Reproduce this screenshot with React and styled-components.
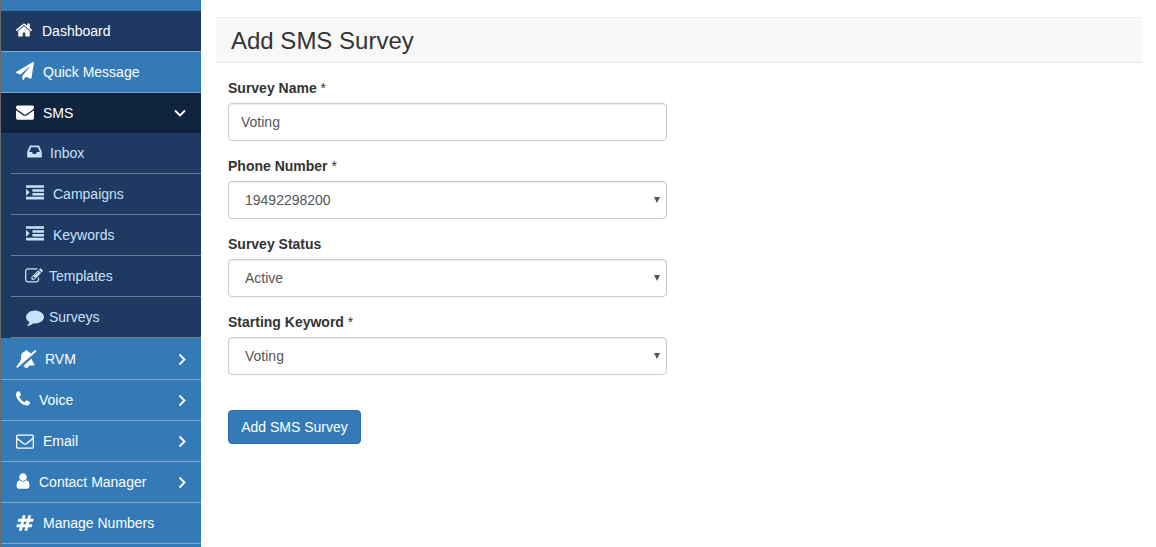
import React from "react";
import styled, { createGlobalStyle } from "styled-components";

const Global = createGlobalStyle`
  html, body { margin: 0; padding: 0; background: #fff; overflow: hidden; }
  body { font-family: "Liberation Sans", Arial, sans-serif; font-size: 14px; color: #333; }
  * { box-sizing: border-box; }
`;

const Page = styled.div`
  display: flex;
  height: 547px;
  width: 1156px;
  overflow: hidden;
`;
const Sidebar = styled.nav`
  width: 201px;
  flex: none;
  height: 547px;
  border-left: 1px solid #6b6b6b;
  background: #337ab7;
  padding-top: 11px;
  overflow: hidden;
`;
const MainRow = styled.a`
  display: flex;
  align-items: center;
  height: ${p => (p.$tone === "active" ? 40 : 41)}px;
  padding: 0 14px ${p => (p.$tone === "active" ? 0 : 1)}px 15px;
  color: #fff;
  font-size: 14px;
  border-bottom: ${p => (p.$tone === "active" ? "none" : "1px solid #7ea8d3")};
  background: ${p => (p.$tone === "active" ? "#10233f" : p.$tone === "dark" ? "#1e3a63" : "#337ab7")};
`;
const SubList = styled.div`
  background: #1e3a63;
  padding-left: 10px;
  margin-bottom: 1px;
`;
const SubRow = styled.a`
  display: flex;
  align-items: center;
  height: 41px;
  padding: 0 0 1px 15px;
  color: #c8e1f8;
  font-size: 14px;
  border-bottom: 1px solid #67799a;
  &:last-child { border-bottom-color: #7b7f86; }
`;
const IconSlot = styled.span`
  flex: none;
  width: ${p => p.$w}px;
  display: flex;
  align-items: center;
  transform: translate(${p => p.$dx || 0}px, ${p => p.$dy || 0}px);
  svg { display: block; fill: currentColor; }
`;
const Label = styled.span`
  flex: 1;
  white-space: nowrap;
`;
const Caret = styled.svg`
  flex: none;
  width: 12px;
  height: 12px;
  overflow: visible;
  fill: none;
  stroke: currentColor;
  stroke-width: 1.8;
`;

const Main = styled.main`
  flex: 1;
  padding: 17px 14px 0 15px;
`;
const TitleBar = styled.header`
  height: 46px;
  background: #f8f8f8;
  border-top: 1px solid #eee;
  border-bottom: 1px solid #e7e7e7;
  padding: 2px 0 0 15px;
  display: flex;
  align-items: center;
`;
const Title = styled.h1`
  margin: 0;
  font-size: 24px;
  font-weight: 400;
  color: #333;
`;
const Form = styled.form`
  width: 439px;
  margin: 15px 0 0 12px;
`;
const Field = styled.div`
  margin-bottom: 15px;
`;
const FieldLabel = styled.label`
  display: block;
  font-weight: 700;
  font-size: 14px;
  line-height: 20px;
  margin-bottom: 5px;
  color: #333;
  span { font-weight: 400; }
`;
const Input = styled.input`
  display: block;
  width: 100%;
  height: 38px;
  padding: 6px 12px;
  font: 14px "Liberation Sans", Arial, sans-serif;
  color: #555;
  background: #fff;
  border: 1px solid #ccc;
  border-radius: 4px;
  box-shadow: inset 0 1px 1px rgba(0, 0, 0, 0.075);
`;
const SelectWrap = styled.div`
  position: relative;
  &::after {
    content: "";
    position: absolute;
    right: 7px;
    top: 16px;
    border-left: 3.5px solid transparent;
    border-right: 3.5px solid transparent;
    border-top: 6px solid #555;
    pointer-events: none;
  }
`;
const Select = styled.select`
  display: block;
  width: 100%;
  height: 38px;
  padding: 6px 12px 6px 16px;
  appearance: none;
  font: 14px "Liberation Sans", Arial, sans-serif;
  color: #555;
  background: #fff;
  border: 1px solid #ccc;
  border-radius: 4px;
  box-shadow: inset 0 1px 1px rgba(0, 0, 0, 0.075);
`;
const Submit = styled.button`
  display: block;
  margin-top: 35px;
  height: 34px;
  width: 133px;
  padding: 0;
  font: 14px "Liberation Sans", Arial, sans-serif;
  color: #fff;
  background: #337ab7;
  border: 1px solid #2e6da4;
  border-radius: 4px;
`;

const P = {
  home: "M1472 992v480q0 26-19 45t-45 19h-384v-384h-256v384h-384q-26 0-45-19t-19-45v-480q0-1 .5-3t.5-3l575-474 575 474q1 2 1 6zm223-69l-62 74q-8 9-21 11h-3q-13 0-21-7l-692-577-692 577q-12 8-24 7-13-2-21-11l-62-74q-8-10-7-23.5t11-21.5l719-599q32-26 76-26t76 26l244 204v-195q0-14 9-23t23-9h192q14 0 23 9t9 23v408l219 182q10 8 11 21.5t-7 23.5z",
  plane: "M1764 11q33 24 27 64l-256 1536q-5 29-32 45-14 8-31 8-11 0-24-5l-453-185-242 295q-18 23-49 23-13 0-22-4-19-7-30.5-23.5t-11.5-36.5v-349l864-1059-1069 925-395-162q-37-14-40-55-2-40 32-59l1664-960q15-9 32-9 20 0 36 11z",
  envelope: "M1792 710v794q0 66-47 113t-113 47h-1472q-66 0-113-47t-47-113v-794q44 49 101 87 362 246 497 345 57 42 92.5 65.5t94.5 48 110 24.5h2q51 0 110-24.5t94.5-48 92.5-65.5q170-123 498-345 57-39 100-87zm0-294q0 79-49 151t-122 123q-376 261-468 325-10 7-42.5 30.5t-54 38-52 32.5-57.5 27-50 9h-2q-23 0-50-9t-57.5-27-52-32.5-54-38-42.5-30.5q-91-64-262-182.5t-205-142.5q-62-42-117-115.5t-55-136.5q0-78 41.5-130t118.5-52h1472q65 0 112.5 47t47.5 113z",
  envelopeO: "M1664 1504v-768q-32 36-69 66-268 206-426 338-51 43-83 67t-86.5 48.5-102.5 24.5h-2q-48 0-102.5-24.5t-86.5-48.5-83-67q-158-132-426-338-37-30-69-66v768q0 13 9.5 22.5t22.5 9.5h1472q13 0 22.5-9.5t9.5-22.5zm0-1051v-24.5l-.5-13-3-12.5-5.5-9-9-7.5-14-2.5h-1472q-13 0-22.5 9.5t-9.5 22.5q0 168 147 284 193 152 401 317 6 5 35 29.5t46 37.5 44.5 31.5 50.5 27.5 43 9h2q20 0 43-9t50.5-27.5 44.5-31.5 46-37.5 35-29.5q208-165 401-317 54-43 100.5-115.5t46.5-131.5zm128-37v1088q0 66-47 113t-113 47h-1472q-66 0-113-47t-47-113v-1088q0-66 47-113t113-47h1472q66 0 113 47t47 113z",
  inbox: "M1151 960h316q-1-3-2.5-8.5t-2.5-7.5l-212-496h-708l-212 496q-1 2-2.5 7.5t-2.5 8.5h316l95 192h320zm513 30v482q0 26-19 45t-45 19h-1408q-26 0-45-19t-19-45v-482q0-62 25-123l238-552q10-25 36.5-42t52.5-17h832q26 0 52.5 17t36.5 42l238 552q25 61 25 123z",
  indent: "M352 832q0 14-9 23l-288 288q-9 9-23 9-13 0-22.5-9.5t-9.5-22.5v-576q0-13 9.5-22.5t22.5-9.5q14 0 23 9l288 288q9 9 9 23zm1440 480v192q0 13-9.5 22.5t-22.5 9.5h-1728q-13 0-22.5-9.5t-9.5-22.5v-192q0-13 9.5-22.5t22.5-9.5h1728q13 0 22.5 9.5t9.5 22.5zm0-384v192q0 13-9.5 22.5t-22.5 9.5h-1088q-13 0-22.5-9.5t-9.5-22.5v-192q0-13 9.5-22.5t22.5-9.5h1088q13 0 22.5 9.5t9.5 22.5zm0-384v192q0 13-9.5 22.5t-22.5 9.5h-1088q-13 0-22.5-9.5t-9.5-22.5v-192q0-13 9.5-22.5t22.5-9.5h1088q13 0 22.5 9.5t9.5 22.5zm0-384v192q0 13-9.5 22.5t-22.5 9.5h-1728q-13 0-22.5-9.5t-9.5-22.5v-192q0-13 9.5-22.5t22.5-9.5h1728q13 0 22.5 9.5t9.5 22.5z",
  edit: "M888 1184l116-116-152-152-116 116v56h96v96h56zm440-720q-16-16-33 1l-350 350q-17 17-1 33t33-1l350-350q17-17 1-33zm80 594v190q0 119-84.5 203.5t-203.5 84.5h-832q-119 0-203.5-84.5t-84.5-203.5v-832q0-119 84.5-203.5t203.5-84.5h832q63 0 117 25 15 7 18 23 3 17-9 29l-49 49q-14 14-32 8-23-6-45-6h-832q-66 0-113 47t-47 113v832q0 66 47 113t113 47h832q66 0 113-47t47-113v-126q0-13 9-22l64-64q15-15 35-7t20 29zm-96-738l288 288-672 672h-288v-288zm444 132l-92 92-288-288 92-92q28-28 68-28t68 28l152 152q28 28 28 68t-28 68z",
  comment: "M1792 896q0 174-120 321.5t-326 233-450 85.5q-70 0-145-8-198 175-460 242-49 14-114 22-17 2-30.5-9t-17.5-29v-1q-3-4-.5-12t2-10 4.5-9.5l6-9 7-8.5 8-9q7-8 31-34.5t34.5-38 31-39.5 32.5-51 27-59 26-76q-157-89-247.5-220t-90.5-281q0-130 71-248.5t191-204.5 286-136.5 348-50.5q244 0 450 85.5t326 233 120 321.5z",
  bellSlash: "M1558 852q61 356 298 556 0 52-38 90t-90 38h-448q0 106-75 181t-181 75-180.5-74.5-75.5-180.5zm-534 860q16 0 16-16t-16-16q-59 0-101.5-42.5t-42.5-101.5q0-16-16-16t-16 16q0 73 51.5 124.5t124.5 51.5zm1002-1600q8 9 7.5 21.5t-9.5 20.5l-1872 1622q-9 8-21.5 7t-20.5-10l-84-96q-8-9-7.5-21.5t9.5-20.5l186-161q-19-32-19-66 50-42 91-88t85-119.5 74.5-158.5 50-206 19.5-260q0-152 117-282.5t307-158.5q-8-19-8-39 0-40 28-68t68-28 68 28 28 68q0 20-8 39 124 18 219 82.5t148 157.5l418-363q10-8 23.5-7t21.5 11z",
  phone: "M1600 1240q0 27-10 70.5t-21 68.5q-21 50-122 106-94 51-186 51-27 0-53-3.5t-57.5-12.5-47-14.5-55.5-20.5-49-18q-98-35-175-83-127-79-264-216t-216-264q-48-77-83-175-3-9-18-49t-20.5-55.5-14.5-47-12.5-57.5-3.5-53q0-92 51-186 56-101 106-122 25-11 68.5-21t70.5-10q14 0 21 3 18 6 53 76 11 19 30 54t35 63.5 31 53.5q3 4 17.5 25t21.5 35.5 7 28.5q0 20-28.5 50t-62 55-62 53-28.5 46q0 9 5 22.5t8.5 20.5 14 24 11.5 19q76 137 174 235t235 174q2 1 19 11.5t24 14 20.5 8.5 22.5 5q18 0 46-28.5t53-62 55-62 50-28.5q14 0 28.5 7t35.5 21.5 25 17.5q25 15 53.5 31t63.5 35 54 30q70 35 76 53 3 7 3 21z",
  user: "M1536 1399q0 109-62.5 187t-150.5 78h-854q-88 0-150.5-78t-62.5-187q0-85 8.5-160.5t31.5-152 58.5-131 94-89 134.5-34.5q131 128 313 128t313-128q76 0 134.5 34.5t94 89 58.5 131 31.5 152 8.5 160.5zm-256-887q0 159-112.5 271.5t-271.5 112.5-271.5-112.5-112.5-271.5 112.5-271.5 271.5-112.5 271.5 112.5 112.5 271.5z",
  hash: "M991 1024l64-256h-254l-64 256h254zm768-504l-56 224q-7 24-31 24h-327l-64 256h311q15 0 25 12 10 14 6 28l-56 224q-5 24-31 24h-327l-81 328q-7 24-31 24h-224q-16 0-26-12-9-12-6-28l78-312h-254l-81 328q-7 24-31 24h-225q-15 0-25-12-9-12-6-28l78-312h-311q-15 0-25-12-9-12-6-28l56-224q7-24 31-24h327l64-256h-311q-15 0-25-12-10-14-6-28l56-224q5-24 31-24h327l81-328q7-24 32-24h224q15 0 25 12 9 12 6 28l-78 312h254l81-328q7-24 32-24h224q15 0 25 12 9 12 6 28l-78 312h311q15 0 25 12 9 12 6 28z",
};

const Glyph = ({ d, size = 18, vbw = 1792 }) => (
  <svg width={(size * vbw) / 1792} height={size} viewBox={`0 0 ${vbw} 1792`} aria-hidden="true">
    <path d={d} />
  </svg>
);

const Chevron = ({ dir }) => (
  <Caret viewBox="0 0 12 12" aria-hidden="true">
    {dir === "down" ? <path d="M0 3.5 5 8.5 10 3.5" /> : <path d="M4.5 1.5 9.5 6.5 4.5 11.5" />}
  </Caret>
);

const Row = ({ tone, d, w, dx, dy, size, vbw, label, chevron }) => (
  <MainRow $tone={tone}>
    <IconSlot $w={w} $dx={dx} $dy={dy}><Glyph d={d} size={size} vbw={vbw} /></IconSlot>
    <Label>{label}</Label>
    {chevron && <Chevron dir={chevron} />}
  </MainRow>
);

const Sub = ({ d, w, dx, dy, label, size }) => (
  <SubRow>
    <IconSlot $w={w} $dx={dx} $dy={dy}><Glyph d={d} size={size} /></IconSlot>
    <Label>{label}</Label>
  </SubRow>
);

const FormField = ({ label, required, children }) => (
  <Field>
    <FieldLabel>{label}{required && <span> *</span>}</FieldLabel>
    {children}
  </Field>
);

const Dropdown = ({ value, options }) => (
  <SelectWrap>
    <Select defaultValue={value}>
      {options.map(o => <option key={o}>{o}</option>)}
    </Select>
  </SelectWrap>
);

export default function App() {
  return (
    <Page>
      <Global />
      <Sidebar>
        <Row tone="dark" d={P.home} w={26} dx={-1} dy={-1} label="Dashboard" />
        <Row d={P.plane} w={27} dy={-1} label="Quick Message" />
        <Row tone="active" d={P.envelope} w={27} dy={-1} label="SMS" chevron="down" />
        <SubList>
          <Sub d={P.inbox} w={24} dy={-1} size={17} label="Inbox" />
          <Sub d={P.indent} w={27} dy={-1} label="Campaigns" />
          <Sub d={P.indent} w={27} dy={-1} label="Keywords" />
          <Sub d={P.edit} w={23} dx={-1} label="Templates" />
          <Sub d={P.comment} w={23} label="Surveys" />
        </SubList>
        <Row d={P.bellSlash} w={29} vbw={2048} label="RVM" chevron="right" />
        <Row d={P.phone} w={23} dx={-2} dy={-1} label="Voice" chevron="right" />
        <Row d={P.envelopeO} w={27} label="Email" chevron="right" />
        <Row d={P.user} w={23} dx={-2} dy={-1} label="Contact Manager" chevron="right" />
        <Row d={P.hash} w={27} label="Manage Numbers" />
      </Sidebar>
      <Main>
        <TitleBar><Title>Add SMS Survey</Title></TitleBar>
        <Form>
          <FormField label="Survey Name" required>
            <Input defaultValue="Voting" />
          </FormField>
          <FormField label="Phone Number" required>
            <Dropdown value="19492298200" options={["19492298200"]} />
          </FormField>
          <FormField label="Survey Status">
            <Dropdown value="Active" options={["Active", "Inactive"]} />
          </FormField>
          <FormField label="Starting Keyword" required>
            <Dropdown value="Voting" options={["Voting"]} />
          </FormField>
          <Submit type="button">Add SMS Survey</Submit>
        </Form>
      </Main>
    </Page>
  );
}
